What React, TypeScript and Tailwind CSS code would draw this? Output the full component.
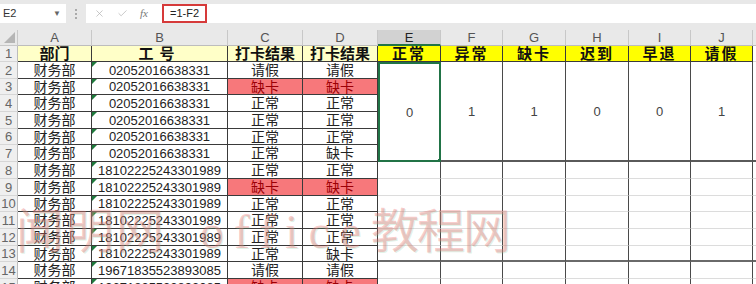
import React from 'react';
import { X, Check } from 'lucide-react';

type Row = { n: number; id: string; c: string; d: string; cRed?: boolean; dRed?: boolean };

const ID1 = '02052016638331';
const ID2 = '18102225243301989';
const ID3 = '19671835523893085';

const rows: Row[] = [
  { n: 2, id: ID1, c: '请假', d: '请假' },
  { n: 3, id: ID1, c: '缺卡', d: '缺卡', cRed: true, dRed: true },
  { n: 4, id: ID1, c: '正常', d: '正常' },
  { n: 5, id: ID1, c: '正常', d: '正常' },
  { n: 6, id: ID1, c: '正常', d: '正常' },
  { n: 7, id: ID1, c: '正常', d: '缺卡' },
  { n: 8, id: ID2, c: '正常', d: '正常' },
  { n: 9, id: ID2, c: '缺卡', d: '缺卡', cRed: true, dRed: true },
  { n: 10, id: ID2, c: '正常', d: '正常' },
  { n: 11, id: ID2, c: '正常', d: '正常' },
  { n: 12, id: ID2, c: '正常', d: '正常' },
  { n: 13, id: ID2, c: '正常', d: '缺卡' },
  { n: 14, id: ID3, c: '请假', d: '请假' },
  { n: 15, id: ID3, c: '缺卡', d: '缺卡', cRed: true, dRed: true },
];

const stats = [
  { label: '正常', value: 0 },
  { label: '异常', value: 1 },
  { label: '缺卡', value: 1 },
  { label: '迟到', value: 0 },
  { label: '早退', value: 0 },
  { label: '请假', value: 1 },
];

const letters = ['A', 'B', 'C', 'D', 'E', 'F', 'G', 'H', 'I', 'J'];

const cell = 'flex items-center justify-center leading-none whitespace-nowrap overflow-hidden';
const dark = 'border-r border-b border-[#3a3a3a]';

const RowNum = ({ n }: { n: number }) => (
  <div className={`${cell} bg-[#efefef] text-[#666] text-[13px] border-r border-b border-r-[#bcbcbc] border-b-[#d6d6d6]`}>
    {n}
  </div>
);

const DataCells = ({ r }: { r: Row }) => (
  <>
    <div className={`${cell} ${dark} text-[14px] text-[#222] bg-white`}>财务部</div>
    <div className={`${cell} ${dark} relative text-[13px] text-[#222] bg-white`}>
      <span className="absolute left-0 top-0 w-0 h-0 border-t-[5px] border-r-[5px] border-t-[#1e7a3c] border-r-transparent" />
      {r.id}
    </div>
    <div className={`${cell} ${dark} text-[14px] ${r.cRed ? 'bg-[#f7787b] text-[#9c0006]' : 'bg-white text-[#222]'}`}>{r.c}</div>
    <div className={`${cell} ${dark} text-[14px] ${r.dRed ? 'bg-[#f7787b] text-[#9c0006]' : 'bg-white text-[#222]'}`}>{r.d}</div>
  </>
);

const App = () => {
  return (
    <div className="relative w-[756px] h-[284px] overflow-hidden bg-[#e8e8e8] font-['Liberation_Sans','Noto_Sans_CJK_SC',sans-serif]">
      {/* formula bar */}
      <div className="h-[30px] pt-[4px]">
        <div className="flex h-[19px] items-stretch">
          <div className="w-[66px] bg-white flex items-center justify-between pl-[3px] pr-[5px] text-[11px] text-[#333]">
            <span>E2</span>
            <span className="text-[8px] text-[#666]">▼</span>
          </div>
          <div className="w-[20px] flex flex-col items-center justify-center gap-[2px]">
            <span className="w-[2px] h-[2px] bg-[#aaa]" />
            <span className="w-[2px] h-[2px] bg-[#aaa]" />
            <span className="w-[2px] h-[2px] bg-[#aaa]" />
          </div>
          <div className="flex-1 bg-white flex items-center">
            <div className="w-[72px] flex items-center gap-[12px] pl-[8px] text-[#b0b0b0]">
              <X size={11} strokeWidth={1.5} />
              <Check size={11} strokeWidth={1.5} />
              <span className="font-['Liberation_Serif',serif] italic text-[11px] text-[#777]">fx</span>
            </div>
            <div className="ml-[4px] h-[19px] w-[45px] border-2 border-[#d63a3a] flex items-center pl-[6px] text-[11px] text-[#222]">
              =1-F2
            </div>
          </div>
        </div>
      </div>

      {/* sheet */}
      <div className="grid grid-cols-[18px_74px_136px_75px_75px_63px_62px_63px_63px_62px_62px_1fr] grid-rows-[16px_16px_17px_16px_17px_17px_16px_17px_17px_17px_16px_17px_17px_16px_17px_17px]">
        {/* column header row */}
        <div className="relative bg-[#e9e9e9] border-r border-b border-[#c8c8c8]">
          <svg className="absolute right-[2px] bottom-[2px]" width="11" height="11" viewBox="0 0 11 11">
            <polygon points="11,0 11,11 0,11" fill="#b5b5b5" />
          </svg>
        </div>
        {letters.map((l) => (
          <div
            key={l}
            className={`${cell} text-[13px] border-r border-r-[#c8c8c8] ${
              l === 'E'
                ? 'bg-[#d2d2d2] text-[#222] border-b-2 border-b-[#217346]'
                : 'bg-[#e9e9e9] text-[#555] border-b border-b-[#bdbdbd]'
            }`}
          >
            {l}
          </div>
        ))}
        <div className="bg-[#e9e9e9] border-b border-[#bdbdbd]" />

        {/* row 1 */}
        <RowNum n={1} />
        <div className={`${cell} ${dark} bg-[#ffffc8] text-[15px] font-bold text-[#111]`}>部门</div>
        <div className={`${cell} ${dark} bg-[#ffffc8] text-[15px] font-bold text-[#111] tracking-[6px]`}>工号</div>
        <div className={`${cell} ${dark} bg-[#ffffc8] text-[15px] font-bold text-[#111]`}>打卡结果</div>
        <div className={`${cell} ${dark} bg-[#ffffc8] text-[15px] font-bold text-[#111]`}>打卡结果</div>
        {stats.map((s) => (
          <div key={s.label} className={`${cell} ${dark} bg-[#ffff00] text-[15px] font-bold text-[#111] tracking-[2px]`}>
            {s.label}
          </div>
        ))}
        <div className="bg-white border-b border-[#dadada]" />

        {rows.map((r) => (
          <React.Fragment key={r.n}>
            <RowNum n={r.n} />
            <DataCells r={r} />
            {r.n === 2 && (
              <>
                {stats.map((s, i) => (
                  <div
                    key={s.label}
                    className={`${cell} row-span-6 bg-white text-[13px] text-[#444] ${
                      i === 0
                        ? 'relative border-2 border-[#217346]'
                        : 'border-r border-r-[#4a4a4a] border-b-2 border-b-[#5a5a5a]'
                    }`}
                  >
                    {s.value}
                    {i === 0 && (
                      <span className="absolute -right-[4px] -bottom-[4px] w-[6px] h-[6px] bg-[#217346] border border-white" />
                    )}
                  </div>
                ))}
                <div className="row-span-6 bg-white border-b-2 border-[#5a5a5a]" />
              </>
            )}
            {r.n >= 8 && (
              <>
                {stats.map((s) => (
                  <div
                    key={s.label}
                    className={`bg-white border-r border-r-[#4a4a4a] ${
                      r.n === 13 ? 'border-b-2 border-b-[#6a6a6a]' : 'border-b border-b-[#dcdcdc]'
                    }`}
                  />
                ))}
                <div className={`bg-white ${r.n === 13 ? 'border-b-2 border-b-[#6a6a6a]' : 'border-b border-b-[#dcdcdc]'}`} />
              </>
            )}
          </React.Fragment>
        ))}
      </div>

      {/* watermark */}
      <div className="absolute left-[16px] top-[208px] flex items-end pointer-events-none text-[rgba(236,110,110,0.36)] font-['Liberation_Serif','Noto_Sans_CJK_SC',serif] text-[48px] leading-none [text-shadow:1px_1px_0_rgba(120,200,150,0.22)]">
        <span className="tracking-[2px]">闻明网</span>
        <span className="ml-[34px] tracking-[10px]">office</span>
        <span className="tracking-[-2px]">教程网</span>
      </div>
    </div>
  );
};

export default App;
